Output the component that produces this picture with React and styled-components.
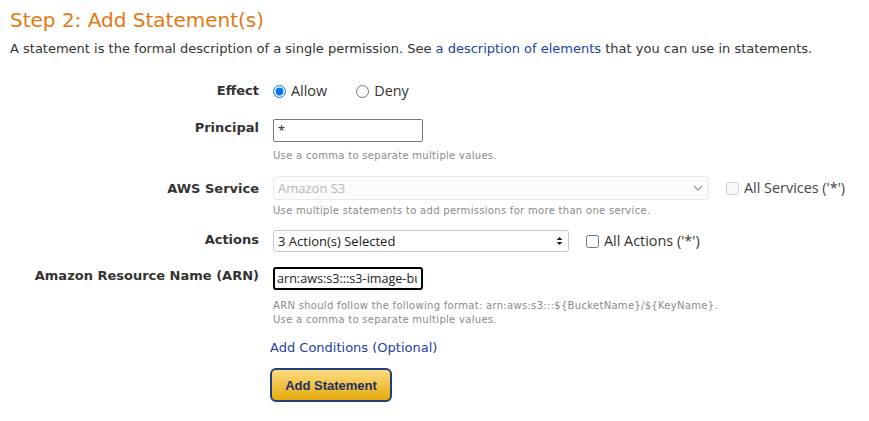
import React from "react";
import styled, { createGlobalStyle } from "styled-components";

const GlobalStyle = createGlobalStyle`
  body {
    margin: 0;
    background: #fff;
    font-family: "DejaVu Sans", Verdana, sans-serif;
    color: #333;
  }
`;

const Page = styled.div`
  padding: 6px 10px 0 10px;
`;

const Title = styled.h2`
  margin: 0;
  font-size: 20px;
  font-weight: normal;
  line-height: 28px;
  color: #e47911;
`;

const Intro = styled.p`
  margin: 6px 0 0;
  font-size: 13px;
  line-height: 18px;
  color: #333;
`;

const Link = styled.a`
  color: #1b3fa5;
  text-decoration: none;
`;

const Form = styled.div`
  margin-top: 24px;
  display: flex;
  flex-direction: column;
`;

const Row = styled.div`
  display: flex;
  gap: 14px;
  margin-top: ${(p) => p.$top || 0}px;
`;

const Label = styled.div`
  width: 249px;
  flex: none;
  text-align: right;
  font-weight: bold;
  font-size: 13px;
  line-height: 18px;
  padding-top: ${(p) => p.$pad || 0}px;
  color: #333;
`;

const Field = styled.div`
  display: flex;
  flex-direction: column;
`;

const Inline = styled.div`
  display: flex;
  align-items: center;
`;

const Choice = styled.label`
  display: flex;
  align-items: center;
  gap: 5px;
  margin-right: ${(p) => p.$gap || 0}px;
  font-family: "Open Sans", "Noto Sans", sans-serif;
  font-size: 14.4px;
  line-height: 18px;
  color: ${(p) => (p.$muted ? "#444" : "#333")};

  input {
    margin: 0;
    width: 13px;
    height: 13px;
  }
`;

const TextInput = styled.input`
  box-sizing: border-box;
  width: 150px;
  height: 23px;
  padding: 0 4px;
  font-family: "Open Sans", "Noto Sans", sans-serif;
  font-size: 12.6px;
  color: #222;
  border: ${(p) => (p.$focused ? "2px solid #000" : "1px solid #767676")};
  border-radius: ${(p) => (p.$focused ? 3 : 2)}px;
  padding-left: ${(p) => (p.$focused ? 2 : 4)}px;
  outline: none;
`;

const SelectWrap = styled.div`
  position: relative;
  width: ${(p) => p.$width}px;
  flex: none;
`;

const Select = styled.select`
  box-sizing: border-box;
  width: 100%;
  height: ${(p) => p.$height}px;
  appearance: none;
  padding: 0 4px;
  font-family: "Open Sans", "Noto Sans", sans-serif;
  font-size: 13px;
  color: ${(p) => (p.disabled ? "#999" : "#222")};
  background: ${(p) => (p.disabled ? "#fafafa" : "#fff")};
  border: 1px solid ${(p) => (p.disabled ? "#e2e2e2" : "#c8c8c8")};
  border-radius: 3px;
  outline: none;
`;

const Caret = styled.svg`
  position: absolute;
  right: ${(p) => p.$right}px;
  top: 50%;
  transform: translateY(-50%);
  pointer-events: none;
`;

const Help = styled.div`
  margin-top: ${(p) => p.$top || 0}px;
  font-size: 10px;
  line-height: 14px;
  color: #8a8a8a;
  letter-spacing: 0.3px;
`;

const Extra = styled.div`
  margin-left: ${(p) => p.$left}px;
`;

const Tail = styled.div`
  margin-left: 260px;
  display: flex;
  flex-direction: column;
  align-items: flex-start;
`;

const CondLink = styled(Link)`
  margin-top: 12px;
  font-size: 13px;
  line-height: 18px;
`;

const Button = styled.button`
  margin-top: 11px;
  width: 122px;
  height: 34px;
  border: 2px solid #223e7c;
  border-radius: 6px;
  background: linear-gradient(#fbdc82, #e7aa0c);
  font-family: "Liberation Sans", Arial, sans-serif;
  font-weight: bold;
  font-size: 13px;
  color: #1d2f66;
  cursor: pointer;
`;

export default function App() {
  return (
    <>
      <GlobalStyle />
      <Page>
        <Title>Step 2: Add Statement(s)</Title>
        <Intro>
          A statement is the formal description of a single permission. See{" "}
          <Link href="#">a description of elements</Link> that you can use in
          statements.
        </Intro>
        <Form>
          <Row>
            <Label>Effect</Label>
            <Inline>
              <Choice $gap={29}>
                <input type="radio" name="effect" defaultChecked />
                Allow
              </Choice>
              <Choice>
                <input type="radio" name="effect" />
                Deny
              </Choice>
            </Inline>
          </Row>

          <Row $top={19}>
            <Label>Principal</Label>
            <Field>
              <TextInput defaultValue="*" />
              <Help $top={7}>Use a comma to separate multiple values.</Help>
            </Field>
          </Row>

          <Row $top={13}>
            <Label $pad={4}>AWS Service</Label>
            <Field>
              <Inline>
                <SelectWrap $width={436}>
                  <Select disabled $height={24}>
                    <option>Amazon S3</option>
                  </Select>
                  <Caret $right={5} width="12" height="8" viewBox="0 0 12 8">
                    <path d="M2 2l4 4 4-4" fill="none" stroke="#aaa" strokeWidth="1.6" />
                  </Caret>
                </SelectWrap>
                <Extra $left={17}>
                  <Choice $muted>
                    <input type="checkbox" disabled />
                    All Services ('*')
                  </Choice>
                </Extra>
              </Inline>
              <Help $top={4}>
                Use multiple statements to add permissions for more than one service.
              </Help>
            </Field>
          </Row>

          <Row $top={12}>
            <Label $pad={1}>Actions</Label>
            <Inline>
              <SelectWrap $width={296}>
                <Select $height={22}>
                  <option>3 Action(s) Selected</option>
                </Select>
                <Caret $right={6} width="7" height="10" viewBox="0 0 7 10">
                  <path d="M0.5 4L3.5 1 6.5 4Z M0.5 6L3.5 9 6.5 6Z" fill="#222" />
                </Caret>
              </SelectWrap>
              <Extra $left={17}>
                <Choice>
                  <input type="checkbox" />
                  All Actions ('*')
                </Choice>
              </Extra>
            </Inline>
          </Row>

          <Row $top={15}>
            <Label>Amazon Resource Name (ARN)</Label>
            <Field>
              <TextInput $focused defaultValue="arn:aws:s3:::s3-image-bucket" />
              <Help $top={9}>
                ARN should follow the following format:
                arn:aws:s3:::$&#123;BucketName&#125;/$&#123;KeyName&#125;.
                <br />
                Use a comma to separate multiple values.
              </Help>
            </Field>
          </Row>

          <Tail>
            <CondLink href="#">Add Conditions (Optional)</CondLink>
            <Button>Add Statement</Button>
          </Tail>
        </Form>
      </Page>
    </>
  );
}
